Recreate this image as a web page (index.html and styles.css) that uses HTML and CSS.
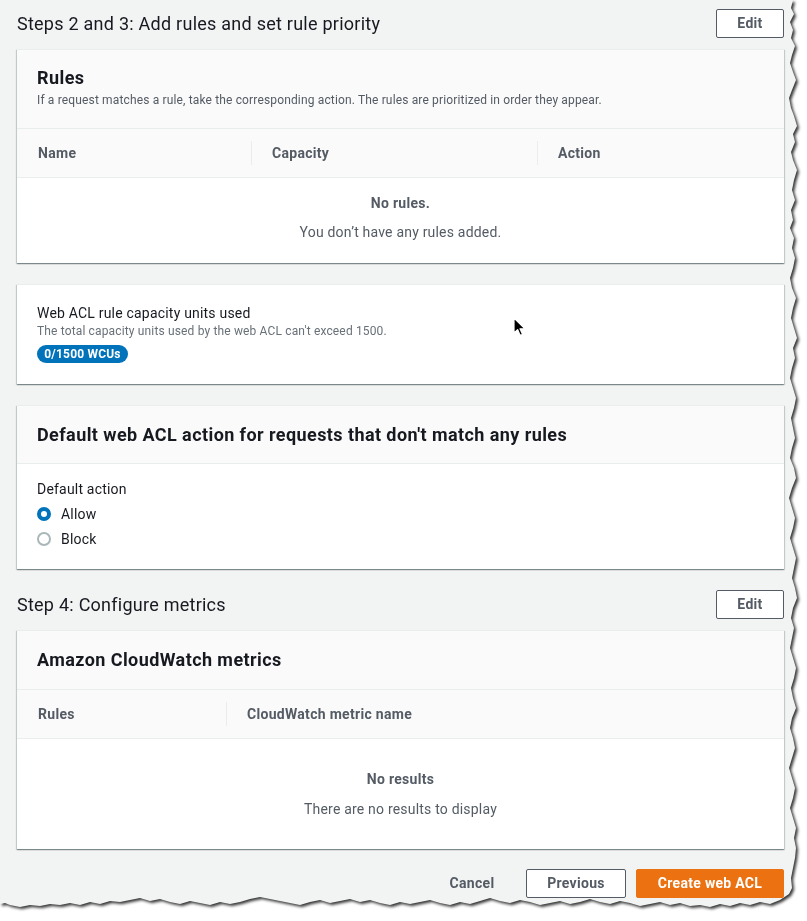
FILE: index.html
```html
<!DOCTYPE html>
<html lang="en">
<head>
<meta charset="utf-8">
<title>Review and create web ACL</title>
<link rel="stylesheet" href="styles.css">
</head>
<body>
<div class="paper">
  <div class="sheet">
    <div class="section-head">
      <h2 class="step-title">Steps 2 and 3: Add rules and set rule priority</h2>
      <button class="btn">Edit</button>
    </div>

    <div class="card">
      <div class="card-head">
        <h3 class="card-title">Rules</h3>
        <p class="card-desc">If a request matches a rule, take the corresponding action. The rules are prioritized in order they appear.</p>
      </div>
      <div class="thead rules-cols">
        <div class="th">Name</div>
        <div class="th sep">Capacity</div>
        <div class="th sep">Action</div>
      </div>
      <div class="empty compact">
        <div class="empty-title">No rules.</div>
        <div class="empty-text">You don’t have any rules added.</div>
      </div>
    </div>

    <div class="card">
      <div class="wcu">
        <div class="wcu-label">Web ACL rule capacity units used</div>
        <div class="wcu-desc">The total capacity units used by the web ACL can't exceed 1500.</div>
        <span class="badge">0/1500 WCUs</span>
      </div>
    </div>

    <div class="card">
      <div class="card-head title-only">
        <h3 class="card-title">Default web ACL action for requests that don't match any rules</h3>
      </div>
      <div class="card-body">
        <div class="field-label">Default action</div>
        <div class="radio-row"><span class="radio checked"></span><span>Allow</span></div>
        <div class="radio-row"><span class="radio"></span><span>Block</span></div>
      </div>
    </div>

    <div class="section-head">
      <h2 class="step-title">Step 4: Configure metrics</h2>
      <button class="btn">Edit</button>
    </div>

    <div class="card">
      <div class="card-head title-only table-top">
        <h3 class="card-title">Amazon CloudWatch metrics</h3>
      </div>
      <div class="thead metrics-cols">
        <div class="th">Rules</div>
        <div class="th sep">CloudWatch metric name</div>
      </div>
      <div class="empty roomy">
        <div class="empty-title">No results</div>
        <div class="empty-text">There are no results to display</div>
      </div>
    </div>

    <div class="actions">
      <button class="btn link">Cancel</button>
      <button class="btn prev">Previous</button>
      <button class="btn primary">Create web ACL</button>
    </div>

    <svg class="cursor" width="14" height="20" viewBox="0 0 14 20" aria-hidden="true">
      <path d="M1 1 L1 16 L4.6 12.6 L7.2 18.4 L9.6 17.4 L7 11.8 L12 11.8 Z" fill="#000" stroke="#fff" stroke-width="1.2" stroke-linejoin="round"/>
    </svg>
  </div>
</div>
</body>
</html>
```

FILE: styles.css
```css
* { box-sizing: border-box; }

html, body {
  margin: 0;
  padding: 0;
  background: #ffffff;
}

body {
  width: 807px;
  height: 921px;
  overflow: hidden;
  font-family: Roboto, "Open Sans", "Liberation Sans", sans-serif;
  font-size: 14px;
  line-height: 20px;
  letter-spacing: 0.2px;
  color: #16191f;
}

.paper {
  width: 807px;
  height: 921px;
  filter: drop-shadow(2px 2px 1.5px rgba(0, 0, 0, 0.8));
}

.sheet {
  position: relative;
  width: 807px;
  height: 921px;
  padding: 9px 23px 0 17px;
  background: #f2f3f3;
  clip-path: polygon(
    0 0, 793px 0, 791px 8px, 794px 14px, 790px 22px, 793px 30px, 791px 38px, 795px 46px,
    792px 55px, 790px 63px, 793px 72px, 796px 80px, 792px 90px, 789px 98px, 791px 108px,
    794px 116px, 797px 126px, 793px 134px, 795px 142px, 791px 152px, 793px 160px, 797px 170px,
    794px 180px, 792px 190px, 795px 200px, 791px 210px, 793px 220px, 790px 228px, 794px 238px,
    792px 248px, 795px 258px, 793px 268px, 790px 278px, 792px 288px, 796px 298px, 793px 308px,
    791px 318px, 794px 328px, 797px 338px, 793px 348px, 795px 358px, 792px 368px, 790px 378px,
    793px 388px, 796px 398px, 794px 408px, 791px 418px, 793px 428px, 795px 438px, 792px 448px,
    790px 458px, 794px 468px, 796px 478px, 792px 488px, 789px 498px, 792px 508px, 795px 518px,
    793px 528px, 790px 538px, 793px 548px, 796px 558px, 794px 568px, 792px 578px, 795px 588px,
    797px 598px, 793px 608px, 791px 618px, 794px 628px, 792px 638px, 790px 648px, 793px 658px,
    796px 668px, 794px 678px, 791px 688px, 793px 698px, 796px 708px, 792px 718px, 790px 728px,
    793px 738px, 795px 748px, 792px 758px, 789px 768px, 792px 778px, 795px 788px, 793px 798px,
    790px 808px, 793px 818px, 796px 828px, 794px 838px, 796px 848px, 795px 858px, 793px 868px,
    791px 878px, 792px 888px, 789px 894px,
    780px 900px, 770px 904px, 760px 902px, 750px 905px, 740px 903px, 730px 906px, 720px 904px,
    710px 907px, 700px 905px, 690px 906px, 680px 903px, 670px 905px, 660px 902px, 650px 904px,
    640px 906px, 630px 903px, 620px 901px, 610px 904px, 600px 902px, 590px 899px, 580px 902px,
    570px 904px, 560px 901px, 550px 903px, 540px 905px, 530px 902px, 520px 900px, 510px 903px,
    500px 901px, 490px 898px, 480px 901px, 470px 904px, 460px 902px, 450px 905px, 440px 903px,
    430px 900px, 420px 902px, 410px 904px, 400px 902px, 390px 905px, 380px 903px, 370px 900px,
    360px 902px, 350px 899px, 340px 901px, 330px 903px, 320px 900px, 310px 902px, 300px 905px,
    290px 903px, 280px 901px, 270px 899px, 260px 897px, 250px 899px, 240px 902px, 230px 904px,
    220px 902px, 210px 905px, 200px 903px, 190px 901px, 180px 904px, 170px 902px, 160px 899px,
    150px 901px, 140px 898px, 130px 900px, 120px 902px, 110px 901px, 100px 904px, 90px 902px,
    80px 905px, 70px 903px, 60px 905px, 50px 904px, 40px 906px, 30px 905px, 20px 907px,
    10px 905px, 5px 903px, 0 904px
  );
}

/* Section headers */
.section-head {
  display: flex;
  justify-content: space-between;
  align-items: center;
  margin-bottom: 11px;
}

.step-title {
  margin: 0;
  font-size: 18px;
  line-height: 29px;
  font-weight: 400;
  letter-spacing: 0.25px;
  color: #16191f;
}

/* Buttons */
.btn {
  height: 29px;
  padding: 0 20px;
  border: 1px solid #545b64;
  border-radius: 2px;
  background: #ffffff;
  color: #545b64;
  font-family: inherit;
  font-size: 14px;
  font-weight: 700;
  line-height: 27px;
  letter-spacing: 0.3px;
  cursor: pointer;
}

.section-head .btn { width: 68px; padding: 0; }

.btn.link {
  border-color: transparent;
  background: transparent;
  width: 84px;
  padding: 0;
  margin-right: 12px;
}

.btn.prev { width: 100px; padding: 0; margin-right: 10px; }

.btn.primary {
  width: 148px;
  padding: 0;
  background: #ec7211;
  border-color: #ec7211;
  color: #ffffff;
}

/* Cards */
.card {
  background: #ffffff;
  border-top: 1px solid #eaeded;
  box-shadow: 0 1px 1px 0 rgba(0, 28, 36, 0.3),
              1px 1px 1px 0 rgba(0, 28, 36, 0.15),
              -1px 1px 1px 0 rgba(0, 28, 36, 0.15);
  margin-bottom: 21px;
}

.card-head {
  background: #fafafa;
  padding: 17px 20px 20px;
  border-bottom: 1px solid #eaeded;
}

.card-head.title-only { padding: 18px 20px 17px; }
.card-head.title-only.table-top { padding-bottom: 18px; }

.card-title {
  margin: 0;
  font-size: 18px;
  line-height: 22px;
  font-weight: 700;
  letter-spacing: 0.42px;
  color: #16191f;
}

.card-desc {
  margin: 3px 0 0;
  font-size: 12px;
  line-height: 16px;
  letter-spacing: 0.15px;
  color: #545b64;
}

/* Table header */
.thead {
  display: grid;
  height: 49px;
  background: #fafafa;
  border-bottom: 1px solid #eaeded;
}

.rules-cols { grid-template-columns: 234px 286px 1fr; }
.metrics-cols { grid-template-columns: 209px 1fr; }

.th {
  position: relative;
  display: flex;
  align-items: center;
  padding-left: 21px;
  font-weight: 700;
  letter-spacing: 0.3px;
  color: #545b64;
}

.th.sep::before {
  content: "";
  position: absolute;
  left: 0;
  top: 12px;
  bottom: 12px;
  width: 1px;
  background: #eaeded;
}

/* Empty states */
.empty {
  text-align: center;
  color: #545b64;
}

.empty.compact { padding: 15px 0 21px; }
.empty.roomy { padding: 30px 0 30px; }

.empty-title { font-weight: 700; letter-spacing: 0.3px; }
.empty-text { margin-top: 9px; }
.empty.roomy .empty-text { margin-top: 10px; }

/* WCU card */
.wcu { padding: 18px 20px 21px; }

.wcu-label { color: #16191f; }

.wcu-desc {
  font-size: 12px;
  line-height: 16px;
  letter-spacing: 0.15px;
  color: #687078;
}

.badge {
  display: block;
  width: 91px;
  height: 18px;
  margin-top: 6px;
  border-radius: 9px;
  background: #0073bb;
  color: #ffffff;
  font-size: 12px;
  line-height: 18px;
  font-weight: 700;
  text-align: center;
}

/* Default action card */
.card-body { padding: 15px 20px 20px; }

.field-label { color: #16191f; }

.radio-row {
  display: flex;
  align-items: center;
  gap: 10px;
  margin-top: 5px;
}

.radio {
  width: 14px;
  height: 14px;
  border-radius: 50%;
  border: 2px solid #aab7b8;
  background: #ffffff;
  flex: none;
}

.radio.checked { border: 4px solid #0073bb; }

/* Footer actions */
.actions {
  display: flex;
  justify-content: flex-end;
  margin-top: -1px;
}

/* Mouse pointer */
.cursor {
  position: absolute;
  left: 513px;
  top: 317px;
}
```
